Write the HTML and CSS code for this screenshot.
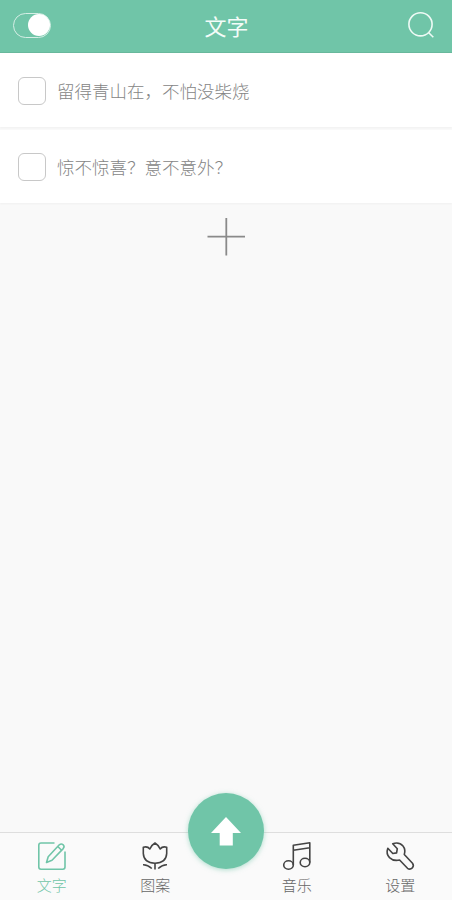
FILE: index.html
```html
<!DOCTYPE html>
<html lang="zh-CN">
<head>
    <meta charset="UTF-8">
    <meta name="viewport" content="width=device-width, initial-scale=1.0">
    <title>文字</title>
    <link rel="stylesheet" href="styles.css">
</head>
<body>

    <header class="header">
        <div class="switch"><span class="switch-dot"></span></div>
        <h1 class="title">文字</h1>
        <svg class="search-icon" viewBox="0 0 28 28">
            <circle cx="13.5" cy="13.3" r="11.6"/>
            <path d="M21.5 21.5 L26.3 26.3"/>
        </svg>
    </header>

    <main class="content">
        <ul class="list">
            <li class="item">
                <span class="checkbox"></span>
                <span class="item-text">留得青山在，不怕没柴烧</span>
            </li>
            <li class="item">
                <span class="checkbox"></span>
                <span class="item-text">惊不惊喜？意不意外？</span>
            </li>
        </ul>
        <button class="add-button">
            <svg viewBox="0 0 38 38">
                <path d="M19.3 0 V37.5 M0.5 18.7 H38"/>
            </svg>
        </button>
    </main>

    <nav class="tabbar">
        <a class="tab active">
            <svg class="tab-icon" viewBox="0 0 32 32">
                <path d="M18.5 3 H5 Q2.8 3 2.8 5.2 V27 Q2.8 29.2 5 29.2 H26.8 Q29 29.2 29 27 V11.5"/>
                <path d="M10.5 22.5 L12.2 16.7 L23.3 4.8 Q25.3 3.2 27.2 4.8 Q28.9 6.6 27.2 8.6 L16 20.3 Z"/>
                <path d="M21.8 6.5 L25.6 10.2"/>
            </svg>
            <span class="tab-text">文字</span>
        </a>
        <a class="tab">
            <svg class="tab-icon" viewBox="0 0 32 32">
                <path d="M4.3 7.3 Q8.5 6 10.8 9 Q12.3 5.2 16 3 Q19.7 5.2 21.2 9 Q23.5 6 27.7 7.3 V13.5 Q27.2 22.8 16 23.2 Q4.8 22.8 4.3 13.5 Z"/>
                <path d="M16 23.2 V29.5 M4 24.7 Q8.5 24.5 12.8 28.5 M28 24.7 Q23.5 24.5 19.2 28.5"/>
            </svg>
            <span class="tab-text">图案</span>
        </a>
        <div class="tab-gap">
            <button class="send-button">
                <svg viewBox="0 0 30 29">
                    <path d="M15 0 L30 16 H21.8 V28.5 H8.7 V16 H0 Z"/>
                </svg>
            </button>
        </div>
        <a class="tab">
            <svg class="tab-icon" viewBox="0 0 32 32">
                <ellipse cx="7.5" cy="25" rx="4.8" ry="4.2"/>
                <ellipse cx="24" cy="22.5" rx="4.8" ry="4.2"/>
                <path d="M12.3 25 V5.2 L28.8 2.8 V22.5 M12.3 10.2 L28.8 7.8"/>
            </svg>
            <span class="tab-text">音乐</span>
        </a>
        <a class="tab">
            <svg class="tab-icon" viewBox="0 0 32 32">
                <path d="M8.7 3.8 Q15 1.5 19 6 Q21.8 9.5 20.3 14.5 L28.5 23.2 Q30.3 25.7 28.3 27.9 Q26 30 23.5 28.3 L15.6 20 Q9.5 21.5 5.5 17.6 Q1.8 13.8 3.8 8.2 L8.8 13.5 L12.6 12.9 L13.3 8.7 Z"/>
            </svg>
            <span class="tab-text">设置</span>
        </a>
    </nav>

</body>
</html>
```

FILE: styles.css
```css
* {
    box-sizing: border-box;
}

body {
    display: flex;
    flex-direction: column;
    height: 100vh;
    margin: 0;
    font-family: 'Noto Sans CJK SC', sans-serif;
    background-color: #f9f9f9;
    color: #666;
}

button {
    border: none;
    padding: 0;
    background: none;
    cursor: pointer;
}

svg {
    display: block;
    fill: none;
}

.header {
    display: flex;
    align-items: center;
    justify-content: space-between;
    height: 53px;
    padding: 0 17px 2px 13px;
    background-color: #70c5a8;
    border-bottom: 1px solid #68b89c;
}

.switch {
    display: flex;
    justify-content: flex-end;
    align-items: center;
    width: 38px;
    height: 25px;
    border: 1px solid #d5eee5;
    border-radius: 13px;
}

.switch-dot {
    width: 22px;
    height: 22px;
    border-radius: 50%;
    background-color: #fff;
}

.title {
    margin: 0;
    padding-right: 5px;
    font-size: 22px;
    font-weight: 400;
    line-height: 32px;
    color: #f4fcf9;
}

.search-icon {
    width: 28px;
    height: 28px;
    stroke: #eefaf5;
    stroke-width: 1.6;
}

.content {
    flex: 1;
}

.list {
    display: flex;
    flex-direction: column;
    gap: 3px;
    margin: 0;
    padding: 0;
    list-style: none;
}

.item {
    display: flex;
    align-items: center;
    gap: 11px;
    height: 73px;
    padding: 1px 18px 0;
    background-color: #fff;
    box-shadow: 0 1px 2px rgba(0, 0, 0, 0.04);
}

.item:first-child {
    height: 74px;
    padding-top: 2px;
}

.checkbox {
    width: 28px;
    height: 28px;
    border: 1px solid #c8c8c8;
    border-radius: 6px;
}

.item-text {
    margin-top: -1px;
    font-size: 17.5px;
    font-weight: 300;
    line-height: 26px;
    color: #858585;
}

.add-button {
    display: block;
    width: 38px;
    height: 38px;
    margin: 15px auto 0;
}

.add-button svg {
    stroke: #8a8a8a;
    stroke-width: 1.8;
}

.tabbar {
    display: flex;
    height: 68px;
    border-top: 1px solid #dedede;
    background-color: #fafafa;
}

.tab {
    flex: 1;
    display: flex;
    flex-direction: column;
    align-items: center;
    padding-top: 7px;
}

.tab-icon {
    width: 32px;
    height: 32px;
    stroke: #444;
    stroke-width: 1.6;
    stroke-linejoin: round;
}

.tab-text {
    margin-top: 2px;
    font-size: 15px;
    font-weight: 300;
    line-height: 22px;
    color: #666;
}

.active .tab-icon {
    stroke: #70c5a8;
}

.active .tab-text {
    color: #70c5a8;
}

.tab-gap {
    display: flex;
    justify-content: center;
    width: 38px;
}

/* round button, half above the bar */
.send-button {
    display: flex;
    flex-shrink: 0;
    align-items: center;
    justify-content: center;
    width: 76px;
    height: 76px;
    margin-top: -40px;
    border-radius: 50%;
    background-color: #70c5a8;
    box-shadow: 0 1px 5px rgba(112, 197, 168, 0.55);
}

.send-button svg {
    width: 30px;
    height: 29px;
    fill: #fff;
}
```
